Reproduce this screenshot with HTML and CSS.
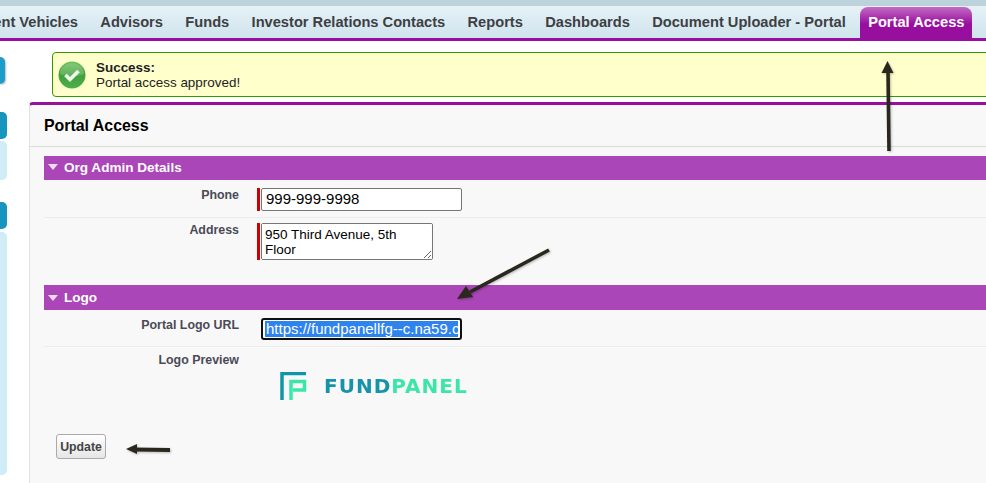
FILE: index.html
```html
<!DOCTYPE html>
<html lang="en">
<head>
  <meta charset="UTF-8">
  <title>Portal Access</title>
  <link rel="stylesheet" href="styles.css">
</head>
<body>
  <div class="top-strip"></div>
  <nav class="tabs">
    <a class="tab first">Investment Vehicles</a>
    <a class="tab">Advisors</a>
    <a class="tab">Funds</a>
    <a class="tab">Investor Relations Contacts</a>
    <a class="tab">Reports</a>
    <a class="tab">Dashboards</a>
    <a class="tab">Document Uploader - Portal</a>
    <a class="tab active">Portal Access</a>
  </nav>
  <div class="layout">
    <aside class="sidebar">
      <div class="side-btn"></div>
      <div class="side-group short">
        <div class="side-head"></div>
        <div class="side-body"></div>
      </div>
      <div class="side-group tall">
        <div class="side-head"></div>
        <div class="side-body"></div>
      </div>
    </aside>
    <main class="content">
      <div class="message">
        <svg class="msg-icon" viewBox="0 0 28 28" width="28" height="28">
          <defs>
            <linearGradient id="okfill" x1="0" y1="0" x2="0" y2="1">
              <stop offset="0" stop-color="#6cc05c"/>
              <stop offset="0.5" stop-color="#3fa03c"/>
              <stop offset="1" stop-color="#4fb04a"/>
            </linearGradient>
          </defs>
          <circle cx="14" cy="14" r="13.5" fill="url(#okfill)"/>
          <path d="M2 13a12 11 0 0 1 24 0q-12 5-24 0z" fill="#fff" opacity="0.18"/>
          <path d="M7.5 14l4.5 4.5 8.5-8.5" fill="none" stroke="#eef7e8" stroke-width="3.6"/>
        </svg>
        <div class="msg-text">
          <strong>Success:</strong>
          <div>Portal access approved!</div>
        </div>
      </div>
      <section class="panel">
        <h2 class="panel-title">Portal Access</h2>
        <div class="panel-body">
          <h3 class="section-head"><span class="twist"></span>Org Admin Details</h3>
          <div class="row">
            <label class="row-label">Phone</label>
            <div class="required"><input class="text-input" type="text" value="999-999-9998"></div>
          </div>
          <div class="row last">
            <label class="row-label">Address</label>
            <div class="required"><textarea class="text-area">950 Third Avenue, 5th Floor</textarea></div>
          </div>
          <h3 class="section-head logo-head"><span class="twist"></span>Logo</h3>
          <div class="row url-row">
            <label class="row-label">Portal Logo URL</label>
            <div class="url-input"><span class="selected">https://fundpanellfg--c.na59.content.force.com/servlet/logo</span></div>
          </div>
          <div class="row last preview-row">
            <label class="row-label">Logo Preview</label>
            <div class="logo">
              <svg viewBox="0 0 27 28" width="27" height="28">
                <path d="M2 28V1.5H26" fill="none" stroke="#0f97a6" stroke-width="3.5"/>
                <path d="M11 28V9.5H24.5V18H13" fill="none" stroke="#3be6a8" stroke-width="3.5"/>
              </svg>
              <span class="logo-word">FUND<span class="logo-accent">PANEL</span></span>
            </div>
          </div>
          <button class="update-btn" type="button">Update</button>
        </div>
      </section>
    </main>
  </div>
  <svg class="arrows" width="986" height="483" viewBox="0 0 986 483">
    <g fill="#2a281e" stroke="#2a281e">
      <path d="M889 151L888 70" stroke-width="3.6" fill="none"/>
      <path d="M887.5 61l-6 12h12z" stroke="none"/>
      <path d="M549 250L470 292" stroke-width="3.6" fill="none"/>
      <path d="M457 299l9-13 7 11z" stroke="none"/>
      <path d="M170 450L135 449.5" stroke-width="4" fill="none"/>
      <path d="M126 449l11-5v10z" stroke="none"/>
    </g>
  </svg>
</body>
</html>
```

FILE: styles.css
```css
* {
  margin: 0;
  padding: 0;
  box-sizing: border-box;
}
html, body {
  height: 100%;
  overflow: hidden;
}
body {
  position: relative;
  background: #fff;
  font-family: "Liberation Sans", Arial, sans-serif;
  color: #222;
}
.top-strip {
  height: 6px;
  background: #bcd3dc;
}
.tabs {
  display: flex;
  height: 35px;
  margin-left: -70px;
  padding-top: 1px;
  white-space: nowrap;
  background: linear-gradient(#e6f1f7, #cfe4ec);
  border-bottom: 3px solid #980e9e;
}
.tab {
  flex: none;
  height: 31px;
  margin-right: 6.35px;
  padding: 7px 8px 0;
  font-size: 14.65px;
  font-weight: bold;
  color: #3d3f44;
}
.tab.active {
  color: #fff;
  border-radius: 8px 8px 0 0;
  background: linear-gradient(#c26cc2 0, #980e9e 55%, #980e9e 100%);
}
.layout {
  display: flex;
  height: 442px;
}
.sidebar {
  flex: none;
  width: 29px;
  padding-top: 16px;
  overflow: hidden;
}
.side-btn {
  width: 5px;
  height: 27px;
  border-radius: 0 5px 5px 0;
  background: #1b9cc9;
  box-shadow: 1px 1px 2px #bbb;
}
.side-group {
  width: 7px;
}
.side-group.short {
  margin-top: 28px;
}
.side-group.tall {
  margin-top: 22px;
}
.side-head {
  height: 27px;
  border-radius: 0 5px 5px 0;
  background: #1795bf;
}
.side-body {
  margin-top: 2px;
  border-radius: 0 5px 5px 0;
  background: #cfecf7;
}
.short .side-body {
  height: 39px;
}
.tall .side-body {
  height: 243px;
  margin-top: 3px;
}
.content {
  flex: 1;
  min-width: 0;
  margin-right: -60px;
}
.message {
  display: flex;
  align-items: center;
  height: 45px;
  margin: 11px 0 5px 23px;
  padding: 0 0 0 5px;
  border: 1px solid #390;
  border-radius: 4px;
  background: #ffc;
}
.msg-icon {
  flex: none;
  margin-right: 10px;
}
.msg-text {
  font-size: 13.45px;
  line-height: 15px;
}
.panel {
  height: 400px;
  border-top: 3px solid #980e9e;
  border-left: 1px solid #e0e0e0;
  border-top-left-radius: 4px;
  background: #f8f8f8;
}
.panel-title {
  height: 42px;
  padding: 12px 0 0 14px;
  font-size: 15.9px;
  color: #000;
  border-bottom: 1px solid #dbdbdb;
}
.panel-body {
  padding: 9px 0 0 14px;
}
.section-head {
  display: flex;
  align-items: center;
  height: 24px;
  padding: 0 0 2px 4px;
  font-size: 13.55px;
  color: #fff;
  background: #aa46b7;
}
.logo-head {
  height: 25px;
  margin-top: 19px;
  padding-bottom: 0;
}
.twist {
  width: 0;
  height: 0;
  margin-right: 6px;
  border-style: solid;
  border-width: 6px 5px 0;
  border-color: #f0dcf2 transparent transparent;
}
.row {
  display: flex;
  padding: 8px 0 6px;
  border-bottom: 1px solid #ececec;
}
.row.last {
  padding-top: 5px;
  border-bottom: none;
}
.row.preview-row {
  padding-top: 6px;
}
.row-label {
  flex: none;
  width: 195px;
  font-size: 12.4px;
  font-weight: bold;
  text-align: right;
  color: #4a4a56;
}
.required {
  display: flex;
  margin-left: 18px;
  padding-left: 1px;
  border-left: 3px solid #c00;
}
.text-input {
  display: block;
  width: 201px;
  height: 23px;
  padding: 0 4px 2px;
  font: 15px "Liberation Sans", Arial, sans-serif;
  color: #000;
  background: #fff;
  border: 1px solid #767676;
  border-radius: 2px;
}
.text-area {
  display: block;
  width: 172px;
  height: 37px;
  padding: 3px;
  font: 13.5px/15px "Liberation Sans", Arial, sans-serif;
  color: #000;
  border: 1px solid #767676;
  border-radius: 2px;
}
.url-input {
  width: 201px;
  height: 22px;
  margin-left: 22px;
  padding: 1px 2px;
  overflow: hidden;
  white-space: nowrap;
  font-size: 15px;
  background: #fff;
  border: 2px solid #101010;
  border-radius: 3px;
}
.selected {
  display: block;
  height: 16px;
  padding-left: 1px;
  overflow: hidden;
  line-height: 16px;
  color: #fff;
  background: #2e83ee;
}
.logo {
  display: flex;
  align-items: center;
  gap: 17px;
  margin: 19px 0 0 41px;
}
.logo-word {
  font: bold 20px "DejaVu Sans", sans-serif;
  letter-spacing: 1px;
  color: #1693aa;
  filter: blur(0.4px);
}
.logo-accent {
  color: #3be6a8;
}
.update-btn {
  display: block;
  width: 50px;
  height: 25px;
  margin: 28px 0 0 12px;
  font: bold 12.3px "Liberation Sans", Arial, sans-serif;
  color: #444;
  background: linear-gradient(#fff, #e6e6e6);
  border: 1px solid #aaa;
  border-radius: 3px;
}
.arrows {
  position: absolute;
  left: 0;
  top: 0;
  pointer-events: none;
  filter: drop-shadow(1px 1px 1px rgba(0, 0, 0, 0.25));
}
```
